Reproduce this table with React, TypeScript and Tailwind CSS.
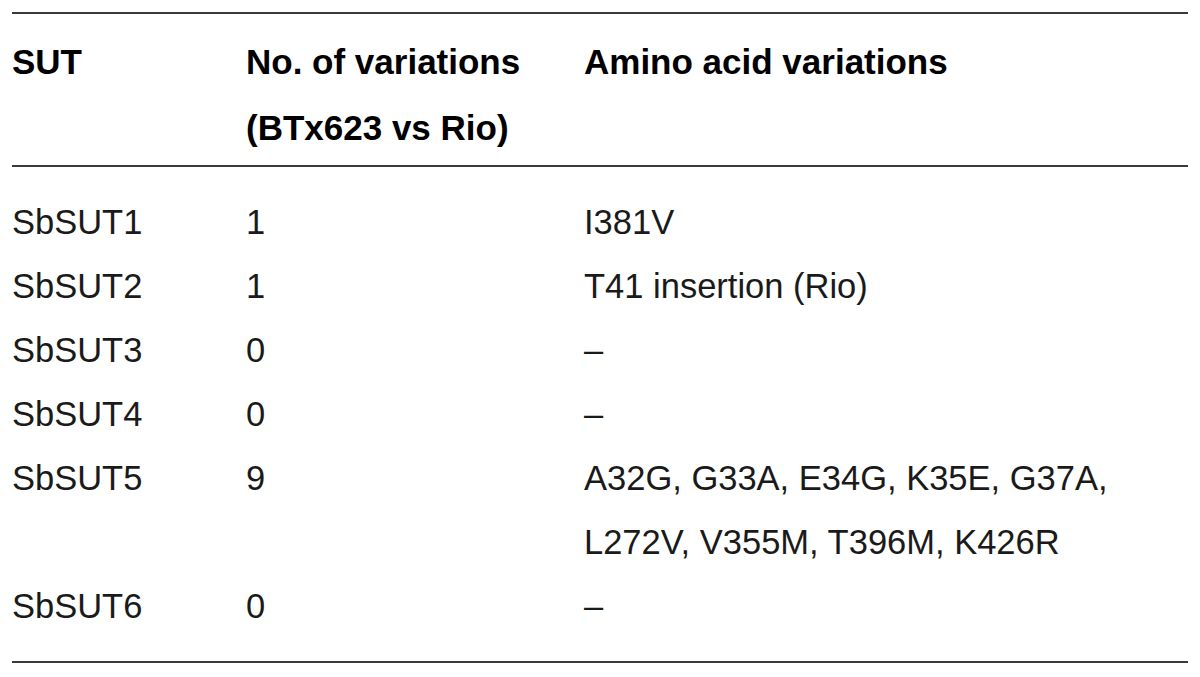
import React from 'react';

const rows: { sut: string; count: string; vars: string[] }[] = [
  { sut: 'SbSUT1', count: '1', vars: ['I381V'] },
  { sut: 'SbSUT2', count: '1', vars: ['T41 insertion (Rio)'] },
  { sut: 'SbSUT3', count: '0', vars: ['–'] },
  { sut: 'SbSUT4', count: '0', vars: ['–'] },
  { sut: 'SbSUT5', count: '9', vars: ['A32G, G33A, E34G, K35E, G37A,', 'L272V, V355M, T396M, K426R'] },
  { sut: 'SbSUT6', count: '0', vars: ['–'] },
];

const App: React.FC = () => {
  return (
    <div className="w-[1200px] h-[677px] bg-white text-black font-['Liberation_Sans',Arial,sans-serif] pt-3 px-3">
      <div className="border-t-2 border-b-2 border-[#3a3a3a] grid grid-cols-[234px_338px_1fr] pt-[15px] pb-1 text-[35px] leading-[66px] font-bold">
        <div>SUT</div>
        <div>
          No. of variations
          <br />
          (BTx623 vs Rio)
        </div>
        <div>Amino acid variations</div>
      </div>

      {/* body rows */}
      <div className="border-b-2 border-[#3a3a3a] pt-[23px] pb-[23px] text-[34.5px] leading-[64px] text-[#1a1a1a]">
        {rows.map(r => (
          <div key={r.sut} className="grid grid-cols-[234px_338px_1fr]">
            <div>{r.sut}</div>
            <div>{r.count}</div>
            <div>
              {r.vars.map(v => (
                <div key={v}>{v}</div>
              ))}
            </div>
          </div>
        ))}
      </div>
    </div>
  );
};

export default App;
